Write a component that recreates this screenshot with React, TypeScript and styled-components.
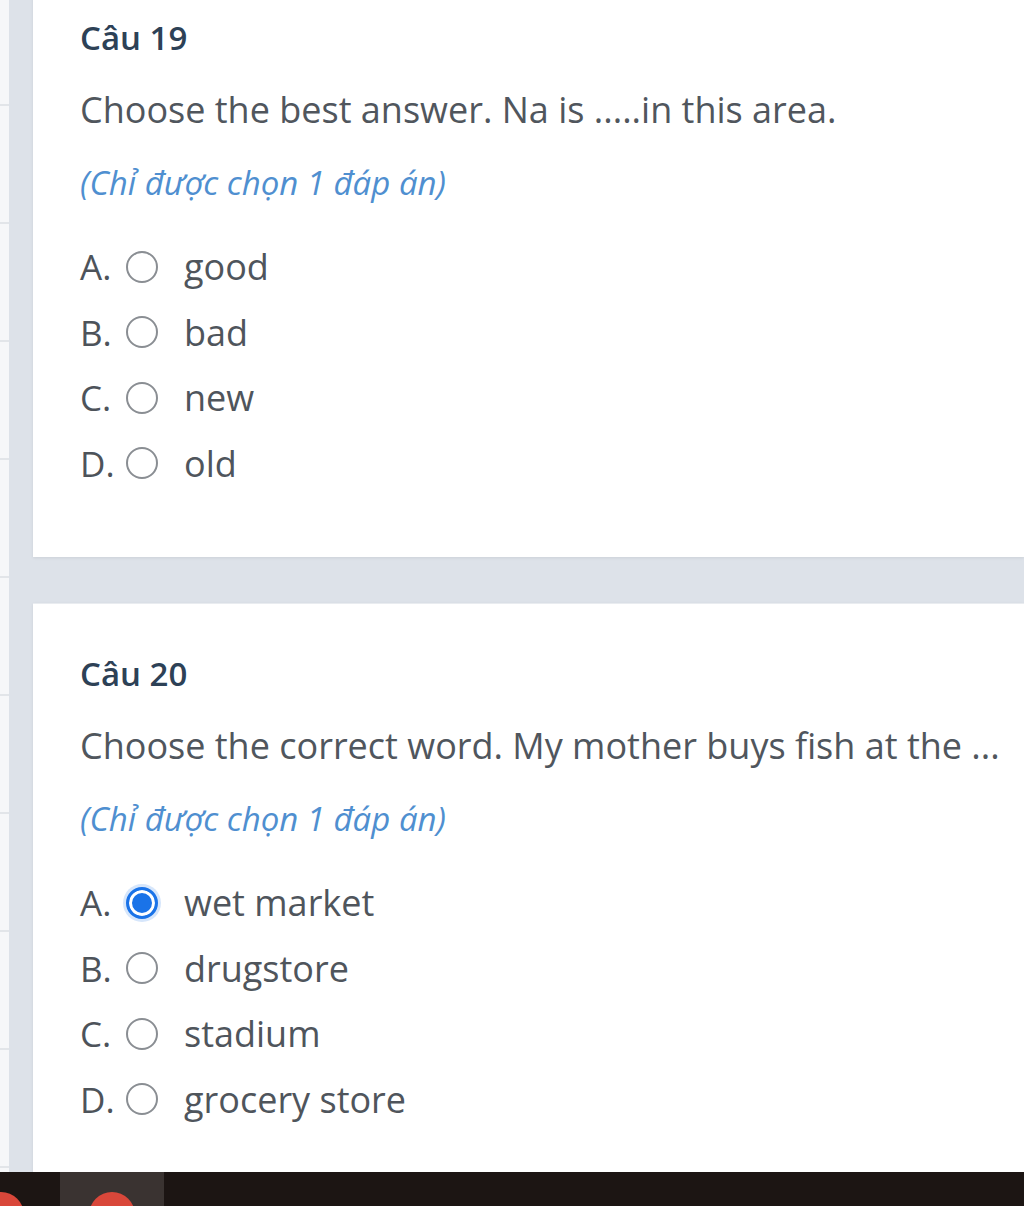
import styled, { createGlobalStyle } from "styled-components"

const GlobalStyle = createGlobalStyle`
  html, body {
    margin: 0;
    padding: 0;
    background: #f4f6f9;
    font-family: "Open Sans", "Noto Sans", sans-serif;
  }
`

const Screen = styled.div`
  width: 1024px;
  height: 1206px;
  display: flex;
  flex-direction: column;
  overflow: hidden;
`

const Workspace = styled.div`
  flex: 1;
  display: flex;
  min-height: 0;
  overflow: hidden;
`

const SideRail = styled.div`
  width: 9px;
  flex-shrink: 0;
  background: repeating-linear-gradient(
    to bottom,
    #f6f7f9 0px,
    #f6f7f9 104px,
    #e2e5e9 104px,
    #e2e5e9 106px,
    #f6f7f9 106px,
    #f6f7f9 118px
  );
`

const Feed = styled.div`
  flex: 1;
  background: #dde2e9;
  padding-left: 24px;
  display: flex;
  flex-direction: column;
  gap: 46px;
`

const Card = styled.section<{ $first?: boolean }>`
  background: #ffffff;
  margin-top: ${(p) => (p.$first ? "-33px" : "0")};
  padding: 50px 0 61px 47px;
  box-shadow: 0 1px 3px rgba(0, 0, 0, 0.08);
  border-top: 1px solid ${(p) => (p.$first ? "transparent" : "#e9ecf0")};
`

const Heading = styled.h2`
  margin: 0;
  font-size: 33px;
  line-height: 40px;
  font-weight: 600;
  color: #2d4156;
`

const Question = styled.p`
  margin: 30px 0 0;
  font-size: 36px;
  line-height: 44px;
  color: #50565d;
  white-space: nowrap;
`

const Hint = styled.p`
  margin: 32px 0 0;
  font-size: 33px;
  line-height: 38px;
  font-style: italic;
  color: #4f8fd0;
  white-space: nowrap;
`

const Options = styled.div`
  margin-top: 32px;
  display: flex;
  flex-direction: column;
`

const Option = styled.label`
  display: flex;
  align-items: center;
  height: 65.5px;
`

const Letter = styled.span`
  width: 46px;
  font-size: 35px;
  font-weight: 500;
  color: #4d535a;
`

const Radio = styled.span<{ $checked?: boolean }>`
  width: 32px;
  height: 32px;
  box-sizing: border-box;
  border-radius: 50%;
  flex-shrink: 0;
  border: ${(p) => (p.$checked ? "3px solid #1a73e8" : "2px solid #8a8e93")};
  background: ${(p) => (p.$checked ? "#1a73e8" : "#fff")};
  box-shadow: ${(p) =>
    p.$checked ? "inset 0 0 0 3px #fff, 0 0 0 3px rgba(26,115,232,0.18)" : "none"};
`

const OptionText = styled.span`
  margin-left: 26px;
  font-size: 36px;
  color: #4f555c;
`

const Taskbar = styled.div`
  height: 34px;
  flex-shrink: 0;
  background: #1c1513;
  display: flex;
  align-items: flex-start;
`

const TaskSlot = styled.div<{ $active?: boolean }>`
  width: ${(p) => (p.$active ? "104px" : "60px")};
  height: 100%;
  background: ${(p) => (p.$active ? "#3a3331" : "transparent")};
  display: flex;
  justify-content: ${(p) => (p.$active ? "center" : "flex-start")};
  overflow: hidden;
`

const TaskIcon = styled.div<{ $shift?: number }>`
  width: 46px;
  height: 46px;
  border-radius: 50%;
  background: #d9473a;
  margin-top: 20px;
  margin-left: ${(p) => p.$shift ?? 0}px;
`

type Q = {
  num: number
  text: string
  options: string[]
  checked?: number
}

const questions: Q[] = [
  {
    num: 19,
    text: "Choose the best answer. Na is .....in this area.",
    options: ["good", "bad", "new", "old"],
  },
  {
    num: 20,
    text: "Choose the correct word. My mother buys fish at the ...",
    options: ["wet market", "drugstore", "stadium", "grocery store"],
    checked: 0,
  },
]

const letters = ["A.", "B.", "C.", "D."]

export default function App() {
  return (
    <Screen>
      <GlobalStyle />
      <Workspace>
        <SideRail />
        <Feed>
          {questions.map((q, qi) => (
            <Card key={q.num} $first={qi === 0}>
              <Heading>Câu {q.num}</Heading>
              <Question>{q.text}</Question>
              <Hint>(Chỉ được chọn 1 đáp án)</Hint>
              <Options>
                {q.options.map((o, i) => (
                  <Option key={o}>
                    <Letter>{letters[i]}</Letter>
                    <Radio $checked={q.checked === i} />
                    <OptionText>{o}</OptionText>
                  </Option>
                ))}
              </Options>
            </Card>
          ))}
        </Feed>
      </Workspace>
      <Taskbar>
        <TaskSlot>
          <TaskIcon $shift={-22} />
        </TaskSlot>
        <TaskSlot $active>
          <TaskIcon />
        </TaskSlot>
      </Taskbar>
    </Screen>
  )
}
